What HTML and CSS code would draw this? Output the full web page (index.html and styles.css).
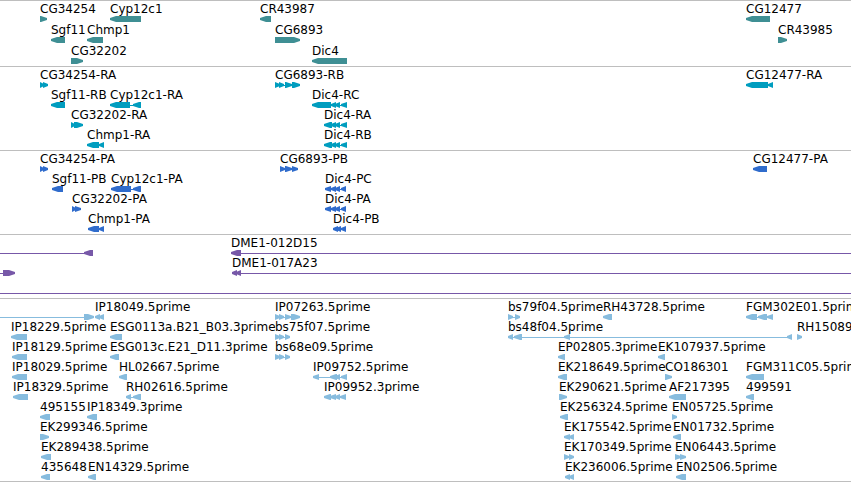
FILE: index.html
```html
<!DOCTYPE html>
<html lang="en">
<head>
  <meta charset="utf-8">
  <title>Genome region</title>
  <link rel="stylesheet" href="styles.css">
</head>
<body>
  <main class="browser">
    <section class="track genes" aria-label="Genes"></section>
    <section class="track transcripts" aria-label="Transcripts"></section>
    <section class="track proteins" aria-label="Proteins"></section>
    <section class="track clones" aria-label="Clones"></section>
    <section class="track ests" aria-label="ESTs"></section>
  </main>
  <script src="tracks.js"></script>
</body>
</html>
```
FILE: styles.css
```css
body {
  margin: 0;
  background-color: #fff;
  color: #000;
  font-family: "DejaVu Sans", Verdana, sans-serif;
  font-size: 12px;
  line-height: 17px;
}

.browser {
  border-bottom: 1px solid #bebebe;
  overflow: hidden;
}

.track {
  border-top: 1px solid #bebebe;
  padding-bottom: 3px;
}

.row {
  position: relative;
  height: 20px;
}

/* labels sit at their feature's start coordinate */
.label {
  position: absolute;
  top: 0;
  white-space: nowrap;
}

.glyphs {
  display: block;
  width: 100%;
  height: 21px;
  fill: currentColor;
}

.genes,
.ests {
  padding-bottom: 2px;
}

.genes .row {
  height: 21px;
}

.genes .glyphs {
  color: #3f8f94;
}

.transcripts .glyphs {
  color: #009dbf;
}

.proteins .glyphs {
  color: #306ccc;
}

.clones .glyphs {
  color: #7758a8;
}

.ests .glyphs {
  color: #87bcde;
}
```
FILE: tracks.js
```js
// feature: [name, strand, [start, end], [start, end], ...]
// an end of null runs off the right edge
const tracks = {
  genes: [
    [
      ['CG34254', '+', [40, 47]],
      ['Cyp12c1', '-', [110, 141]],
      ['CR43987', '-', [260, 271]],
      ['CG12477', '-', [746, 770]]
    ],
    [
      ['Sgf11', '-', [51, 65]],
      ['Chmp1', '-', [87, 103]],
      ['CG6893', '+', [275, 300]],
      ['CR43985', '+', [778, 787]]
    ],
    [
      ['CG32202', '+', [71, 83]],
      ['Dic4', '-', [312, 347]]
    ]
  ],
  transcripts: [
    [
      ['CG34254-RA', '+', [40, 44], [43, 48]],
      ['CG6893-RB', '+', [275, 280], [279, 284], [285, 292], [292, 300]],
      ['CG12477-RA', '-', [746, 768], [768, 773]]
    ],
    [
      ['Sgf11-RB', '-', [51, 65]],
      ['Cyp12c1-RA', '-', [110, 130], [133, 141]],
      ['Dic4-RC', '-', [312, 331], [331, 336], [335, 340], [341, 347]]
    ],
    [
      ['CG32202-RA', '+', [71, 75], [74, 83]],
      ['Dic4-RA', '-', [324, 332], [331, 336], [335, 340], [341, 347]]
    ],
    [
      ['Chmp1-RA', '-', [87, 99], [99, 104]],
      ['Dic4-RB', '-', [324, 332], [331, 336], [335, 340], [341, 347]]
    ]
  ],
  proteins: [
    [
      ['CG34254-PA', '+', [40, 44], [43, 48]],
      ['CG6893-PB', '+', [280, 285], [285, 292], [292, 298]],
      ['CG12477-PA', '-', [753, 767]]
    ],
    [
      ['Sgf11-PB', '-', [52, 63]],
      ['Cyp12c1-PA', '-', [111, 131], [133, 141]],
      ['Dic4-PC', '-', [325, 331], [331, 336], [335, 340], [341, 346]]
    ],
    [
      ['CG32202-PA', '+', [72, 76], [75, 81]],
      ['Dic4-PA', '-', [325, 331], [331, 336], [335, 340], [341, 346]]
    ],
    [
      ['Chmp1-PA', '-', [88, 99], [99, 104]],
      ['Dic4-PB', '-', [333, 338], [336, 341], [341, 346]]
    ]
  ],
  clones: [
    [
      ['', '-', [0, 0], [84, 93]],
      ['DME1-012D15', '-', [231, 241], [241, null]]
    ],
    [
      ['', '+', [0, 0], [3, 15]],
      ['DME1-017A23', '-', [232, 237], [236, 241], [241, null]]
    ],
    [
      ['', '-', [0, null]]
    ]
  ],
  ests: [
    [
      ['', '+', [0, 0], [84, 94]],
      ['IP18049.5prime', '-', [95, 100], [99, 104]],
      ['IP07263.5prime', '+', [275, 280], [279, 284], [285, 291], [291, 300]],
      ['bs79f04.5prime', '+', [508, 513], [515, 520]],
      ['RH43728.5prime', '-', [603, 612]],
      ['FGM302E01.5prime', '-', [746, 757], [758, 767], [767, 773]]
    ],
    [
      ['IP18229.5prime', '-', [11, 27]],
      ['ESG0113a.B21_B03.3prime', '-', [110, 122]],
      ['bs75f07.5prime', '+', [275, 280], [279, 284], [285, 290]],
      ['bs48f04.5prime', '-', [508, 513], [514, 522], [564, 570], [787, 792]],
      ['RH15089.5prime', '+', [797, 802]]
    ],
    [
      ['IP18129.5prime', '-', [12, 27]],
      ['ESG013c.E21_D11.3prime', '-', [110, 119]],
      ['bs68e09.5prime', '+', [275, 280], [279, 284], [285, 290]],
      ['EP02805.3prime', '-', [558, 565]],
      ['EK107937.5prime', '-', [658, 665]]
    ],
    [
      ['IP18029.5prime', '-', [12, 27]],
      ['HL02667.5prime', '-', [119, 127]],
      ['IP09752.5prime', '-', [313, 319], [330, 337], [335, 340], [341, 347]],
      ['EK218649.5prime', '-', [558, 567]],
      ['CO186301', '+', [665, 672]],
      ['FGM311C05.5prime', '-', [746, 764]]
    ],
    [
      ['IP18329.5prime', '-', [13, 28]],
      ['RH02616.5prime', '-', [126, 131], [133, 141]],
      ['IP09952.3prime', '-', [324, 331], [330, 336], [335, 340], [340, 346]],
      ['EK290621.5prime', '+', [559, 567]],
      ['AF217395', '-', [669, 686]],
      ['499591', '-', [746, 754]]
    ],
    [
      ['495155', '-', [40, 50]],
      ['IP18349.3prime', '-', [87, 97]],
      ['EK256324.5prime', '-', [560, 568]],
      ['EN05725.5prime', '+', [672, 677]]
    ],
    [
      ['EK299346.5prime', '+', [40, 49]],
      ['EK175542.5prime', '-', [564, 570], [569, 574]],
      ['EN01732.5prime', '-', [673, 681]]
    ],
    [
      ['EK289438.5prime', '-', [41, 51]],
      ['EK170349.5prime', '+', [564, 569], [569, 574]],
      ['EN06443.5prime', '+', [675, 681], [680, 686]]
    ],
    [
      ['435648', '-', [41, 50]],
      ['EN14329.5prime', '-', [88, 96]],
      ['EK236006.5prime', '-', [565, 570], [569, 574]],
      ['EN02506.5prime', '-', [676, 686]]
    ]
  ]
};

const SVG = 'http://www.w3.org/2000/svg';

function addShape(svg, name, attrs) {
  const shape = document.createElementNS(SVG, name);
  for (const key in attrs) {
    shape.setAttribute(key, attrs[key]);
  }
  svg.appendChild(shape);
}

// a box with a pointed end on the side of the strand
function drawExon(svg, start, end, strand) {
  const head = Math.min(6, end - start);
  const tip = strand === '+' ? end : start;
  const tail = strand === '+' ? start : end;
  const neck = strand === '+' ? end - head : start + head;
  addShape(svg, 'polygon', {
    points: `${tail},15 ${neck},15 ${tip},17 ${tip},19 ${neck},21 ${tail},21`
  });
}

function drawFeature(row, svg, feature) {
  const [name, strand, ...exons] = feature;
  const first = exons[0][0];
  const last = exons[exons.length - 1][1];

  if (name) {
    const label = document.createElement('span');
    label.className = 'label';
    label.textContent = name;
    label.style.left = first + 'px';
    row.appendChild(label);
  }

  if (exons.length > 1 || last === null) {
    addShape(svg, 'rect', {
      x: first,
      y: 18,
      width: last === null ? '100%' : last - first,
      height: 1
    });
  }

  exons.forEach(([start, end]) => {
    if (end !== null && end > start) {
      drawExon(svg, start, end, strand);
    }
  });
}

for (const name in tracks) {
  const section = document.querySelector('.' + name);
  tracks[name].forEach(features => {
    const row = document.createElement('div');
    const svg = document.createElementNS(SVG, 'svg');
    row.className = 'row';
    svg.setAttribute('class', 'glyphs');
    svg.setAttribute('aria-hidden', 'true');
    row.appendChild(svg);
    features.forEach(feature => drawFeature(row, svg, feature));
    section.appendChild(row);
  });
}
```
